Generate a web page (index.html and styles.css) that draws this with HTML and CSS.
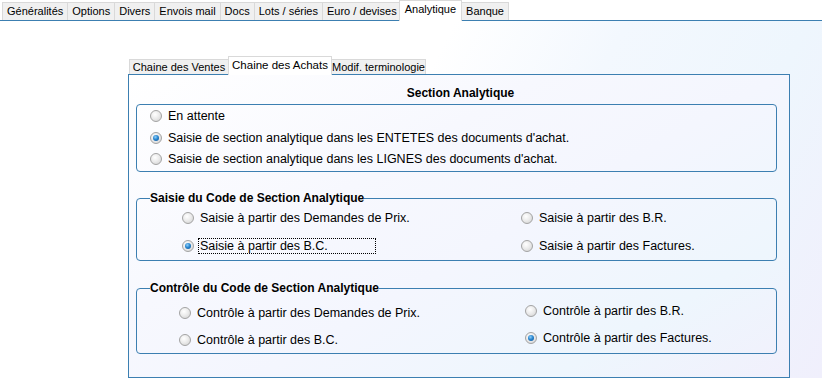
FILE: index.html
```html
<!DOCTYPE html>
<html lang="fr">
<head>
  <meta charset="UTF-8" />
  <title>Analytique</title>
  <link rel="stylesheet" href="styles.css">
</head>
<body>
  <div class="tabs">
    <span class="tab">Généralités</span>
    <span class="tab">Options</span>
    <span class="tab">Divers</span>
    <span class="tab">Envois mail</span>
    <span class="tab">Docs</span>
    <span class="tab">Lots / séries</span>
    <span class="tab">Euro / devises</span>
    <span class="tab active">Analytique</span>
    <span class="tab">Banque</span>
  </div>

  <div class="page">
    <div class="subtabs">
      <span class="subtab w1">Chaine des Ventes</span>
      <span class="subtab w2 active">Chaine des Achats</span>
      <span class="subtab w3">Modif. terminologie</span>
    </div>

    <div class="panel">
      <div class="heading">Section Analytique</div>

      <div class="box">
        <label class="opt"><span class="radio"></span>En attente</label>
        <label class="opt"><span class="radio on"></span>Saisie de section analytique dans les ENTETES des documents d'achat.</label>
        <label class="opt"><span class="radio"></span>Saisie de section analytique dans les LIGNES des documents d'achat.</label>
      </div>

      <fieldset class="group saisie">
        <legend>Saisie du Code de Section Analytique</legend>
        <div class="cols">
          <div class="col left">
            <label class="opt"><span class="radio"></span>Saisie à partir des Demandes de Prix.</label>
            <label class="opt"><span class="radio on"></span><span class="focus">Saisie à partir des B.C.</span></label>
          </div>
          <div class="col right">
            <label class="opt"><span class="radio"></span>Saisie à partir des B.R.</label>
            <label class="opt"><span class="radio"></span>Saisie à partir des Factures.</label>
          </div>
        </div>
      </fieldset>

      <fieldset class="group controle">
        <legend>Contrôle du Code de Section Analytique</legend>
        <div class="cols">
          <div class="col left">
            <label class="opt"><span class="radio"></span>Contrôle à partir des Demandes de Prix.</label>
            <label class="opt"><span class="radio"></span>Contrôle à partir des B.C.</label>
          </div>
          <div class="col right">
            <label class="opt"><span class="radio"></span>Contrôle à partir des B.R.</label>
            <label class="opt"><span class="radio on"></span>Contrôle à partir des Factures.</label>
          </div>
        </div>
      </fieldset>
    </div>
  </div>
</body>
</html>
```

FILE: styles.css
```css
* {
  box-sizing: border-box;
}
body {
  margin: 0;
  font-family: 'Liberation Sans', Arial, sans-serif;
  font-size: 12.5px;
  color: #000;
  background: #fff;
  min-height: 378px;
}

/* main tab strip */
.tabs {
  display: flex;
  align-items: flex-end;
  height: 21px;
  padding-left: 2px;
  border-bottom: 1px solid #3c7fb1;
  background: #fff;
}
.tab {
  height: 18px;
  padding: 0 4px;
  line-height: 17px;
  font-size: 11px;
  white-space: nowrap;
  background: #f0f0f0;
  border: 1px solid #d9d9d9;
  border-bottom: none;
  margin-right: -1px;
}
.tab.active {
  height: 21px;
  margin: 0 -1px -1px -2px;
  padding: 0 5px;
  line-height: 17px;
  background: #fff;
  position: relative;
  z-index: 1;
}

.page {
  padding: 35px 0 0 128px;
  min-height: 357px;
  background: linear-gradient(118deg, #fff 0%, #fff 45%, #f3f8fe 62%, #eef6fd 80%, #f0effc 100%);
}

/* sub tabs */
.subtabs {
  display: flex;
  align-items: flex-end;
  height: 18px;
  padding-left: 1px;
}
.subtab {
  height: 15px;
  line-height: 14px;
  font-size: 11px;
  white-space: nowrap;
  text-align: center;
  background: #f0f0f0;
  border: 1px solid #d9d9d9;
  border-bottom: none;
}
.subtab.w1 { width: 100px; }
.subtab.w2 { width: 104px; }
.subtab.w3 { width: 95px; margin-left: -1px; }
.subtab.active {
  height: 19px;
  margin: 0 0 -1px -1px;
  line-height: 16px;
  font-size: 11.5px;
  background: #fff;
  position: relative;
  z-index: 1;
}

.panel {
  width: 662px;
  border: 1px solid #3c7fb1;
  padding: 10px 12px 23px 7px;
  background: linear-gradient(150deg, #fff 0%, #f7f8fe 35%, #f4f6fe 55%, #eef6fd 80%, #f1f0fc 100%);
}
.heading {
  font-size: 12px;
  font-weight: bold;
  text-align: center;
  line-height: 16px;
  margin-bottom: 3px;
  padding-left: 8px;
}

.box {
  border: 1px solid #3c7fb1;
  border-radius: 4px;
  padding: 3px 0 4px 13px;
  display: flex;
  flex-direction: column;
  gap: 5.5px;
}

.opt {
  display: flex;
  align-items: center;
  height: 16px;
  white-space: nowrap;
}

.radio {
  width: 12px;
  height: 12px;
  margin-right: 6px;
  border: 1px solid #a3a3a3;
  border-radius: 50%;
  background: radial-gradient(circle at 40% 35%, #fff 0%, #ececec 45%, #cfcfcf 100%);
  position: relative;
  flex: none;
}
.radio.on::after {
  content: "";
  position: absolute;
  left: 2px;
  top: 2px;
  width: 6px;
  height: 6px;
  border-radius: 50%;
  background: radial-gradient(circle at 40% 35%, #8fd0fa 0%, #2a86cf 45%, #0b4f92 100%);
}

.focus {
  display: block;
  width: 178px;
  height: 16px;
  line-height: 14px;
  border: 1px dotted #000;
  padding-left: 1px;
  margin-left: -2px;
}

.group {
  margin: 19px 0 0 0;
  padding: 0;
  border: 1px solid #3c7fb1;
  border-radius: 4px;
  min-width: 0;
}
.group legend {
  font-size: 12px;
  font-weight: bold;
  line-height: 14px;
  padding: 0;
  margin-left: 13px;
}
.group.controle {
  margin-top: 20px;
}

.cols {
  display: flex;
}
.col {
  display: flex;
  flex-direction: column;
}
.saisie .col {
  gap: 12px;
  padding-top: 5px;
  padding-bottom: 6px;
}
.saisie .left {
  width: 339px;
  margin-left: 45px;
}
.controle .col {
  gap: 11px;
}
.controle .left {
  width: 346px;
  margin-left: 42px;
  padding-top: 10px;
  padding-bottom: 5px;
}
.controle .right {
  padding-top: 8px;
}
```
